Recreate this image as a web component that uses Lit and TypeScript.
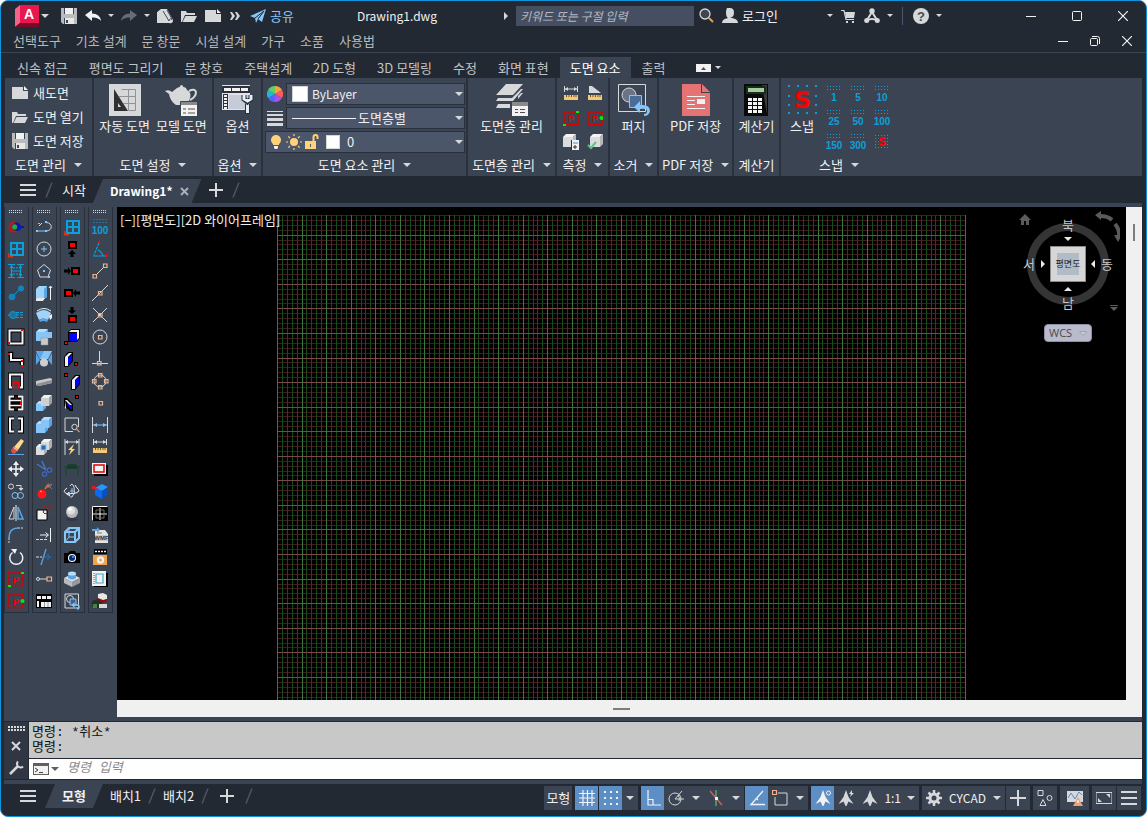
import { LitElement, html, svg, css } from "lit";
import { customElement, property } from "lit/decorators.js";
import { classMap } from "lit/directives/class-map.js";

/* ---------- drawing helpers ---------- */
const s = (c: string, d: string, w = 1) => svg`<path d=${d} fill="none" stroke=${c} stroke-width=${w}></path>`;
const f = (c: string, d: string) => svg`<path d=${d} fill=${c}></path>`;
const dash = (c: string, d: string, a = "2 1", w = 1) =>
  svg`<path d=${d} fill="none" stroke=${c} stroke-width=${w} stroke-dasharray=${a}></path>`;
const dot = (c: string, x: number, y: number, r: number) => svg`<circle cx=${x} cy=${y} r=${r} fill=${c}></circle>`;
const ring = (c: string, x: number, y: number, r: number, w = 1) =>
  svg`<circle cx=${x} cy=${y} r=${r} fill="none" stroke=${c} stroke-width=${w}></circle>`;
const label = (c: string, x: number, y: number, size: number, t: string) =>
  svg`<text x=${x} y=${y} font-size=${size} fill=${c} text-anchor="middle" font-weight="700" font-family="Liberation Sans, sans-serif">${t}</text>`;
const ic = (body: unknown, w = 16, h = w, vw = w, vh = h) =>
  html`<svg class="ic" width=${w} height=${h} viewBox="0 0 ${vw} ${vh}" aria-hidden="true">${body}</svg>`;

const CY = "#0d9fdb", LB = "#86c5f7", MB = "#5aa5e6", W = "#f2f2f2", G = "#d6d8da", R = "#ff0000", K = "#000", OR = "#f2b48c", BL = "#0000ff", NG = "#00f000", YE = "#ffd27a";

const caret = html`<svg class="caret" width="8" height="4" viewBox="0 0 8 4" aria-hidden="true"><path d="M0 0h8L4 4z" fill="#d6d8da"></path></svg>`;
const smallCaret = html`<svg class="caret" width="6" height="3" viewBox="0 0 6 3" aria-hidden="true"><path d="M0 0h6L3 3z" fill="#d6d8da"></path></svg>`;
const slash = html`<svg class="slash" width="8" height="16" viewBox="0 0 8 16" aria-hidden="true"><path d="M1 15.500L7 .5" stroke="#4b5564" stroke-width="1.500"></path></svg>`;
const burger = ic(f(G, "M0 0h16v2H0zM0 5h16v2H0zM0 10h16v2H0z"), 16, 12);
const plus = ic(f(G, "M6 0h2v14H6zM0 6h14v2H0z"), 14);

/* ---------- shared glyphs ---------- */
const iSave = [f("#b9bbbd", "M0 0h16v16H2l-2-2z"), f(W, "M4 0h8v6H4z"), f("#e8e8e8", "M4 10h9v6H4z"), f("#3b4453", "M5 12h2v3H5z"), f("#3b4453", "M3 0h1v6H3zM12 0h1v6h-1zM3 10h1v6H3z")];
const iOpen = [f(G, "M0 3h5l1 2h8v2H4L1 14H0z"), f(G, "M4.500 8H16l-3 6H1.500z")];
const iNew = [f(G, "M0 2h11v4h5v8H0z"), f(W, "M12 1l4 4h-4z")];
const iWindow = [s(CY, "M3 2h12v12H3zM9 2v12M3 8h12", 2), f("#e03010", "M0 12h1.500v3H5v1.500H0z")];
const iPsq = [s("#d80000", "M1 2h14v12.500H1z", 1.5), label("#f00000", 8, 11.5, 9, "P")];
const iP1 = [iPsq, f(NG, "M13 1h3v2h-3zM0 14h3v2H0z")];
const iP2 = [iPsq, dot(NG, 14.5, 8, 2)];
const iRuler = [s(G, "M1.500 0v6M14.500 0v6M2 3h12"), f(G, "M2 3l3-2v4zM14 3l-3-2v4z"), f("#f5c878", "M1 9h14v5H1z"), s("#6b5a30", "M3.500 9v2M6 9v2M8.500 9v2M11 9v2M13 9v2")];
const purge16 = [s(G, "M1 1h13.500v14H1z"), ring(G, 6, 6, 3.5), f("#4b5f80", "M6 6h6v6H6z"), s(LB, "M6 6h6v6H6z"), s(LB, "M9.500 12h3.500a2 2 0 0 1 0 4", 1.5), f(LB, "M7.500 12l3-3v6z")];
const sq = (x: number, y: number) => s(OR, `M${x - 1.5} ${y - 1.5}h3.500v3.500h-3.500z`, 1.2);
const slab = (x: number, y: number) => [f(K, `M${x} ${y + 4}l4-5h5v9l-5 6h-4z`), f(W, `M${x + 1} ${y + 4}l4-4h3l-4 4v9h-3z`), f(BL, `M${x + 4} ${y + 5}l4-4v7l-4 4z`)];
const redAt = (x: number, y: number) => [f(K, `M${x} ${y}h4v4h-4z`), f(R, `M${x + 1} ${y + 1}h2v2h-2z`)];
const redBox = (x: number, y: number) => [f(K, `M${x} ${y}h9v8h-9z`), f(R, `M${x + 2} ${y + 2}h5v4h-5z`)];
const cube = (x: number, y: number, z: number, a: string, b: string, c: string) => [
  f(a, `M${x} ${y + 3}h${z}v${z}h${-z}z`),
  f(b, `M${x} ${y + 3}l3-3h${z}l-3 3z`),
  f(c, `M${x + z} ${y + 3}l3-3v${z}l-3 3z`),
];

type Tool = [string, unknown];

const palettes: Tool[][] = [
  [
    ["색상", [ring("#d01010", 6, 8, 4.5, 2), f("#1414b4", "M6 4c4-2 6 1 7 3h3v2h-3c-1 3-4 4-7 2l3-2V6z"), dot("#20b040", 6.7, 8, 2.5)]],
    ["창", iWindow],
    ["높이", [s(CY, "M0 1.500h7M3.500 2v13M0 14.500h7M9 1.500h7M12.500 2v13M9 14.500h7", 1.2), s(CY, "M4 8h9"), dash(CY, "M5 11h8M5 5h8", "2 1"), f(CY, "M1.500 5h4l-2-3zM10.500 5h4l-2-3zM1.500 11h4l-2 3zM10.500 11h4l-2 3z")]],
    ["연결", [s(CY, "M3 13L13 3"), dot("#1683b5", 4, 12, 3.3), dot("#1683b5", 13, 3.5, 3)]],
    ["축", [ring(CY, 5, 8, 3.5), s(CY, "M0 8h8M3 6h4M3 10h4"), dash(CY, "M8 8h8M8 5.500h8M8 10.500h8", "3 1")]],
    ["사각형", [s(K, "M1.500 1.500h13v13h-13z", 4), s(W, "M1.500 1.500h13v13h-13z", 2), f(R, "M13 0h2v2h-2zM0 13h2v2H0z")]],
    ["꺾은선", [s(K, "M0 3h3v6h11v5", 4.5), s(W, "M0 3h3v6h11v5", 2), f(R, "M0 2h2v2H0zM13 9h2v2h-2zM13 14h2v2h-2z")]],
    ["열림", [s(K, "M4 14.500H2v-13h12v13h-2", 4), s(W, "M4 14.500H2v-13h12v13h-2", 2.2), s(R, "M5.500 9.500h5v5h-5z", 1.5)]],
    ["구간", [f(K, "M0 0h16v16H0z"), s(W, "M6 1.500H1.500v13H6M10 1.500h4.500v13H10", 2), s(W, "M2 5.500h11M2 10.500h11", 1.5), s("#8a1010", "M8 1v4M8 11v4"), f(R, "M12 6h2v4h-2z")]],
    ["괄호", [s(K, "M6 1.500H2v13h4M10 1.500h4v13h-4", 4), s(W, "M6 1.500H2v13h4M10 1.500h4v13h-4", 2)]],
    ["지우기", [f("#ffd890", "M6 8l7-8 3 2-6 9z"), f("#e05040", "M3 11l3-3.500L10 11l-3 3.500q-3 1-4-3.500z"), s(W, "M5.500 8.500l4 3"), s(MB, "M0 15.500h16", 1)]],
    ["이동", [s(W, "M8 2v12M2 8h12", 1.5), f(W, "M8 0l3 4H5zM8 16l3-4H5zM0 8l4-3v6zM16 8l-4-3v6z")]],
    ["복사", [ring(G, 3, 3.5, 2.5), s(G, "M8 2.500h5v4"), f(G, "M10.500 5h5L13 8z"), ring(LB, 7, 12.5, 3), ring(LB, 12.5, 12.5, 3)]],
    ["대칭", [s(G, "M6 2v12H1z"), s(MB, "M10 2v12h5z", 1.5), s(W, "M8 0v16")]],
    ["모깎기", [dash(G, "M1 16v-5", "2 1"), s(MB, "M1 11Q1 1 10 1", 1.5), dash(G, "M10 1h6", "2 1")]],
    ["회전", [s(W, "M4.500 3.500A6.500 6.500 0 1 0 12 3.500", 1.5), f(W, "M3 0h6l-2 5z")]],
    ["영역 1", iP1],
    ["영역 2", iP2],
  ],
  [
    ["폴리선", [s(LB, "M1 12h9", 1), s(G, "M10 3.500c7 0 7 8.500 0 8.500M3 7l3-3"), f(LB, "M0 11h2v2H0zM9 2h2v2H9zM9 11h2v2H9zM2 4h2v1H2z")]],
    ["원", [ring(G, 8, 8, 7), s(LB, "M8 5v6M5 8h6", 1)]],
    ["다각형", [s(G, "M8 1.500L14.500 7 12 14H4L1.500 7z"), f(LB, "M7 7h2v2H7zM12 13h2v2h-2z")]],
    ["돌출", [f("#9fd3fa", "M0 4l3-3h8v11l-3 2H0z"), f(MB, "M8 4l3-3v11l-3 2z"), f("#e8e8e8", "M0 14l2-1h7l-2 3H0z"), s(W, "M14.500 15V1M13 3l1.500-2L16 3")]],
    ["스윕", [f("#9fd3fa", "M0 6q8-6 15 0l-3 7q-5-3-9 0z"), s(W, "M1 4q7-5 14 0"), f(MB, "M3 13q4-3 9 0l-1 2q-4-2-7 0z"), f(W, "M13 9l3-2v4l-2 2z")]],
    ["블록", [cube(1, 1, 8, MB, "#b4ddfb", "#3f8fd4"), cube(0, 0, 9, LB, "#b4ddfb", MB), f(LB, "M9 3h7v6H9z"), f("#c9cacc", "M5 9h7v7H5z"), s("#8a8c90", "M5 9h7v7H5z", 0.5)]],
    ["로프트", [f(LB, "M0 0h16l-4 8H4z"), f(MB, "M0 0l4 8 4-8zM0 2v12l4-5zM16 2v12l-4-5z"), dot("#d0d0d0", 8, 11.5, 4)]],
    ["쐐기", [f("#c8c8c8", "M0 8l14-3 2 1v4L3 13 0 12z"), f("#8d8f92", "M0 11l16-4v3L3 13z")]],
    ["상자", [cube(0, 6, 7, LB, "#b4ddfb", MB), cube(5, 0, 8, "#cfcfcf", "#f0f0f0", "#a0a2a4")]],
    ["합집합", [cube(0, 4, 9, LB, "#b4ddfb", MB), cube(5, 0, 8, LB, "#b4ddfb", MB)]],
    ["교집합", [cube(0, 5, 8, "#dcdcdc", "#f4f4f4", "#b0b0b0"), cube(5, 0, 8, "#dcdcdc", "#f4f4f4", "#b0b0b0"), f("#2f6cb0", "M5 6h5v5H5z"), s(LB, "M5 6h5v5H5z")]],
    ["자르기", [s("#4676c8", "M1 3l9 6M6 0l4 9", 1.5), ring("#3d68c0", 8.5, 13, 2.2, 1.3), ring("#3d68c0", 13.5, 9, 2.2, 1.3)]],
    ["분해", [dot("#ff1818", 6, 11, 4.5), s("#ffb0b0", "M4 8l2 1"), s("#c07840", "M9 6l2-3h3", 1.5), dot("#f06020", 12, 3, 1.8), s("#707880", "M12 0l1 2 3-1-2 3 2 2", 1)]],
    ["잘라내기", [f(W, "M1 5h10v10H1z"), s(K, "M1 5h10v10H1z"), dash("#d01000", "M7.500 1h8v7.500h-8z", "3 1", 1.2)]],
    ["연장", [s(W, "M4 8h8M9.500 5.500L12.500 8l-3 2.500M14.500 1v14"), dash(G, "M0 12.500h12", "3 1")]],
    ["트림", [dash(G, "M0 8h6", "3 1"), s(MB, "M10 0L5 16", 1.3), dash("#2a78c0", "M8 8h8M12 5v6", "3 1")]],
    ["늘이기", [ring(G, 2, 8, 1.5), s(G, "M3 8h8"), s(OR, "M11 6h4.500v4H11z", 1.2)]],
    ["필름", [f(K, "M0 1h16v14H0z"), f(W, "M1 3h4v3H1zM6 3h4v3H6zM11 3h4v3h-4zM1 8h2v6H1zM5 9h10v5H5z"), s("#9a9a9a", "M8.500 9v5M12 9v5")]],
  ],
  [
    ["창 삽입", iWindow],
    ["위로", [redBox(4, 0), f(K, "M8 9l4 4H9.500v3h-3v-3H4z")]],
    ["오른쪽", [redBox(7, 4), f(K, "M7 8L4 4v2.500H0v3h4V12z")]],
    ["왼쪽", [redBox(0, 4), f(K, "M9 8l3-4v2.500h4v3h-4V12z")]],
    ["아래로", [redBox(4, 8), f(K, "M8 7L4 3.500h2.500V0h3v3.500H12z")]],
    ["면 앞", [f(K, "M4 3l3-3h9v9l-3 4H4z"), f(W, "M5 3l2-2h8l-2 2zM13 3l2-2v8l-2 2z"), f(BL, "M5 4h8v8H5z"), redAt(0, 12)]],
    ["면 오른쪽", [slab(0, 2), redAt(10, 11)]],
    ["면 뒤", [redAt(0, 0), slab(7, 3)]],
    ["면 왼쪽", [f(K, "M0 3h3l6 6v7H6L0 11z"), f(BL, "M3 5l5 5v5l-5-5z"), f(W, "M1 5h2l5 5H6zM1 5l1 8-1 1z"), redAt(11, 0)]],
    ["창 줌", [s(G, "M1 1h13.500v9M1 1v13.500h8"), ring(G, 10.5, 10, 2.7), s("#c98d6c", "M12.500 12l3 3", 1.5)]],
    ["빠른 치수", [s(G, "M1 0v16M15 0v16M1 3h14"), f(G, "M1 3l3-2v4zM15 3l-3-2v4z"), f(YE, "M10 5L4 11h3l-2 5 6-6H8z")]],
    ["가구", [s("#1d4a30", "M0 6h16M2 6v8M14 6v8", 1.5), f("#183c2a", "M3 4q5-2 10 0v4H3z")]],
    ["궤도", [s(G, "M6 3q2-4 4 1 2 6-2 10-3 1-3-5"), s(W, "M3 5q-6 4 1 6l8-1q5-2 1-5M5 9l-2 2.500 3 1M11 2l2 3"), s(LB, "M8 5v5M6 8h5")]],
    ["구", [svg`<ellipse cx="8" cy="14.500" rx="6" ry="1.500" fill="#303844"></ellipse>`, dot("#b8b8b8", 8, 7, 6), dot("#e0e0e0", 7, 5.5, 4), dot("#fff", 6, 4, 1.8)]],
    ["와이어 큐브", [s(LB, "M1 5l4-4h10v10l-4 4H1zM1 5h10v10M11 5l4-4", 2), s(LB, "M5 1v9L1 15M5 10h6", 1)]],
    ["카메라", [f(K, "M0 4h4l2-2h5l1 2h4v10H0z"), dot("#fff", 8, 9, 4), dot("#0a2a80", 8, 9, 3), dot("#20c0ff", 9, 8, 1)]],
    ["돌출 면", [f("#e0e0e0", "M0 7l8-4 8 4-8 4z"), f("#b9bbbd", "M0 7l8 4v5l-8-4z"), f("#98999c", "M16 7l-8 4v5l8-4z"), f(MB, "M4 2v5q4 3 8 0V2z"), svg`<ellipse cx="8" cy="2.500" rx="4" ry="2" fill="#b4ddfb"></ellipse>`]],
    ["퍼지", purge16],
  ],
  [
    ["스냅 100", [dash(CY, "M1.500 .5h14M1.500 3.500h14", "1 2", 1), label(CY, 8, 15, 10, "100")]],
    ["각도", [dash(CY, "M7 2L2 14", "3 1", 1.2), s(CY, "M1 15h14M6 9q4 2 5 6", 1.2), f("#e01010", "M6 0h2v2H6zM14 13h2v3h-2z")]],
    ["끝점", [s(G, "M3 13L13 3"), f("#3b4453", "M1 11h4v4H1zM11 1h4v4h-4z"), sq(2.5, 13), sq(13, 2.5)]],
    ["중간점", [s(G, "M0 16L16 0"), sq(8, 8)]],
    ["교차점", [s(G, "M1 1l14 14M15 1L1 15"), sq(8, 8)]],
    ["중심", [ring(G, 8, 8, 7), sq(8, 8)]],
    ["직교", [s(G, "M7.500 0v10M0 12.500h16"), sq(7, 12)]],
    ["사분점", [ring(G, 8, 8, 6), sq(8, 2), sq(8, 14), sq(2, 8), sq(14, 8)]],
    ["노드", sq(8.5, 8)],
    ["선형 치수", [s(G, "M.5 0v16M15.500 0v16"), s(LB, "M1 8h14"), f(LB, "M1.500 8L5 6v4zM14.500 8L11 6v4z")]],
    ["치수 자", iRuler],
    ["뷰포트", [f(K, "M2 4h14v11H2z"), f(W, "M0 2h14v11H0z"), s("#e00000", "M2 4h10v7H2z", 1.5)]],
    ["솔리드", [f("#2a96ff", "M3 5l7-4 6 3-6 4z"), f("#0a6cf0", "M3 5l7 3v8l-7-4z"), f("#0850c0", "M16 4l-6 4v8l6-4z"), f("#e02020", "M0 3h3v3H0z"), s("#e02020", "M3 4.500l4 2")]],
    ["배열", [f(K, "M0 1h16v15H0z"), s(W, "M8 3v12M1 9h14", 1), s("#707070", "M4 5h8v8H4z"), s(W, "M.5 15.500V1.500h15")]],
    ["WMF", [f("#e4e4e4", "M3 3h10l3 4v9H3z"), s("#7d7d7d", "M5 6h5"), f(MB, "M0 2h5V0l3 3-3 3V4H0z"), f("#c8c8c8", "M3 8h13v6H3z"), label("#30353c", 9.5, 13, 6, "WMF")]],
    ["디스크", [f(K, "M2 0h13v5H2z"), dash(W, "M3 2.500h11", "2 1", 1.5), f("#f3a24a", "M1 6h14v10H1z"), dot(W, 8.5, 11, 3.7), dot("#f3a24a", 8.5, 11, 1.5)]],
    ["레이아웃", [f(K, "M2 2h14v14H2z"), f(W, "M0 0h14v15H0z"), s("#4aa2c8", "M4 3h7v9H4z", 1.2), dash("#555", "M2 2v12", "1 1")]],
    ["일괄", [f("#e8e8e8", "M6 1l5-1 4 2v4l-5 2-4-2z"), f("#8b1010", "M6 5l5 2 4-1v2l-5 2-4-2z"), f("#2c2c2c", "M0 8l5-2 5 3v6H3l-3-2z"), f("#3a8a3a", "M1 11h4v4H1z"), f("#d8d8d8", "M7 11h8v4H7z")]],
  ],
];

/* ---------- tool palette column ---------- */
@customElement("tool-palette")
class ToolPalette extends LitElement {
  @property({ attribute: false }) tools: Tool[] = [];
  static styles = css`
    :host { display: flex; flex-direction: column; align-items: flex-start; width: 25px; box-sizing: border-box; border: 1px solid #2a303b; border-top: 0; background: #3b4453; }
    .grip { display: block; margin: 3px 0 3px 4px; }
    button { display: grid; place-items: center; width: 22px; height: 22px; padding: 0; border: 0; background: none; }
    button:hover { background: #4a566b; }
    .ic { overflow: visible; }
  `;
  render() {
    return html`<svg class="grip" width="13" height="3" viewBox="0 0 13 3" aria-hidden="true">${dash(G, "M0 .5h13M0 2.500h13", "1 1")}</svg>
      ${this.tools.map(([name, body]) => html`<button aria-label=${name}>${ic(body)}</button>`)}`;
  }
}

/* ---------- navigation cube ---------- */
@customElement("view-cube")
class ViewCube extends LitElement {
  static styles = css`
    :host { display: flex; flex-direction: column; align-items: center; width: 104px; }
    svg { display: block; }
    text { font-family: "Noto Sans CJK KR", sans-serif; }
    button { display: flex; align-items: center; justify-content: space-between; width: 48px; height: 18px; margin-top: 6px; padding: 0 4px; border: 1px solid #8d8fa2; border-radius: 4px; background: #b9bacb; color: #4a4a4a; font: 11px/16px "Open Sans", "Noto Sans CJK KR", sans-serif; }
  `;
  render() {
    return html`<svg width="104" height="108" viewBox="0 0 104 108" role="img" aria-label="뷰 큐브">
        <path d="M3 10l6-6 6 6h-2v5h-3v-4H8v4H5v-5z" fill="#5c5c5c"></path>
        <circle cx="52" cy="54" r="37" fill="none" stroke="#353535" stroke-width="8"></circle>
        <path d="M84 6q8 0 12 4M99 14q5 6 4 13" fill="none" stroke="#5a5a5a" stroke-width="4"></path>
        <path d="M79 5l6-4v9zM98 25h8l-4 7z" fill="#5a5a5a"></path>
        <rect x="34.500" y="36.500" width="35" height="35" fill="#d6d6d6" stroke="#8c8c8c"></rect>
        <rect x="41" y="43" width="22" height="22" fill="#b2bcc6"></rect>
        <text x="52" y="57" font-size="9" text-anchor="middle" fill="#20242a">평면도</text>
        <path d="M48 27h8l-4 4zM48 81h8l-4-4zM25 50v8l4-4zM79 50v8l-4-4z" fill="#e8e8e8"></path>
        <g font-size="13" fill="#c8c8c8" text-anchor="middle">
          <text x="52" y="20">북</text><text x="13" y="59">서</text><text x="91" y="59">동</text><text x="52" y="98">남</text>
        </g>
        <path d="M94 95h8v1h-8zM94 97h8l-4 4z" fill="#5c5c5c"></path>
      </svg>
      <button>WCS<svg width="8" height="5" viewBox="0 0 8 5"><path d="M.5 .5h7L4 4.500z" fill="#c4d0d4" stroke="#98a8ac"></path></svg></button>`;
  }
}

/* ---------- ribbon artwork ---------- */
const rAuto = [f(G, "M0 0h32v32H0z"), f("#303030", "M5 5l14 22H5z"), f(G, "M9 19l3 4H9z"), s("#909295", "M12.500 5.500h14v21h-7M19.500 5.500v21M10 12.500h17M14 19.500h13")];
const rTeapot = [f(G, "M12 4q5-3 9 0l1 2q6 3 2 11l-3 4H11Q5 17 4 10L0 7q4-2 7 1z"), dot(G, 16.5, 2.5, 1.5), s(G, "M24 7q6-3 7 1 0 5-6 8", 2), f(W, "M16 18h16v14H16z"), f("#8a8a8a", "M16 18h16v3H16z"), s("#505050", "M18 25h3M23 25h7M18 29h3M23 29h7"), s("#3b4453", "M15.500 32V17.500H32")];
const rOption = [f("#dfe2ea", "M0 1h28v25H0z"), f("#2c3038", "M0 2h28v7H0zM1 10h5v15H1z"), f(W, "M2 4h7v3H2zM10 4h8v3h-8zM19 4h7v3h-7z"), dash(W, "M3.500 11v14", "2 1", 3), f("#c7cbd8", "M7 11h20v14H7z"), s("#26303f", "M25.500 20v10", 5), s("#e8ecf4", "M25.500 18v11", 3), s("#26303f", "M22 11v4l3.500 3 3.500-3v-4", 5), s("#e8ecf4", "M22 11v4l3.500 2 3.500-2v-4", 3)];
const rLayers = [f(G, "M10 0h17L17 11H0zM2 14h14l9-9h2L17 17H0zM2 20h12v4H0z"), f(G, "M22 12l3-3h2l-5 6z"), f(W, "M16 18h16v14H16z"), f("#8a8a8a", "M16 18h16v4H16z"), s("#505050", "M19 25.500h3M24 25.500h5M19 28.500h3M24 28.500h5"), s("#3b4453", "M15.500 32V17.500H32")];
const rPurge = [s(G, "M.5 .5h27v27H.5z"), f("#6b7483", "M11 4a7 7 0 1 0 .1 0z"), ring(G, 11, 11, 7), f("#4a6c98", "M11 11h13v13H11z"), s(LB, "M11.500 11.500h12v12h-12z"), f(LB, "M16 23l6-6v4q10-1 10 6-1 5-6 5v-2q3 0 3-3 0-3-7-2v4z")];
const rPdf = [f("#e57373", "M0 0h19v9h9v23H0z"), f("#e57373", "M20 0l8 8h-8z"), s("#3b4453", "M19.500 0v8.500H28"), f(W, "M5 12h18v1H5zM5 16h8v1H5zM5 20h8v1H5zM5 24h18v1H5zM15 15h8v5h-8z")];
const rCalc = [f("#0a0a0a", "M0 0h24v32H0z"), f("#3a3a3a", "M18 1h5v30z"), f("#143018", "M2 2h20v8H2z"), f("#a9c9a0", "M4 4h16v4H4z"), ...[14, 18, 22, 26].flatMap((y) => [4, 9, 14].map((x) => f("#f4f4f4", `M${x} ${y}h4v3h-4z`)))];
const rSnap = [...[2, 11, 20, 29].flatMap((p) => [f(CY, `M${p} 1h2v2h-2zM${p} 28h2v2h-2z`), p > 2 && p < 29 ? f(CY, `M2 ${p}h2v2H2zM29 ${p}h2v2h-2z`) : svg``]),
  svg`<text x="16.500" y="24" font-size="23" font-weight="700" font-family="DejaVu Sans, sans-serif" text-anchor="middle" fill="#ff0000">S</text>`];
const wheel = ic([["#ffa040", 0], ["#ff5c5c", 60], ["#b050e0", 120], ["#6060ff", 180], ["#20b8d8", 240], ["#60d060", 300]].map(([c, a]) => svg`<path d="M8 8V0a8 8 0 0 1 6.930 4z" fill=${c} transform="rotate(${a} 8 8)"></path>`));
const weights = ic(f(G, "M0 1h16v1H0zM0 4h16v2H0zM0 8h16v3H0zM0 13h16v3H0z"));
const bulb = ic([dot(YE, 8, 6, 5), f(YE, "M5 9h6v2H5z"), f(W, "M6 12h4v2l-1 1H7l-1-1z")]);
const sun = ic([dot(YE, 8, 8, 4), s(YE, "M8 0v2M8 14v2M0 8h2M14 8h2M2.300 2.300l1.700 1.700M12 12l1.700 1.700M2.300 13.700L4 12M12 4l1.700-1.700", 1.2)]);
const lock = ic([f(YE, "M1 7h11v8H1z"), s(YE, "M9.500 7V3q0-2 2-2t2 2v2", 2), f("#4a566b", "M6 10h1v3H6z")]);
const mProtractor = [f(G, "M2 0h3l9 7H2z"), f("#f5c878", "M1 9h14v5H1z"), s("#6b5a30", "M3.500 9v2M6 9v2M8.500 9v2M11 9v2M13 9v2")];
const mCalc = [cube(0, 0, 10, "#dcdcdc", "#f4f4f4", "#b8b8b8"), f("#26303f", "M8 6h8v10H8z"), f(W, "M9 6h7v10H9z"), f(LB, "M10 8h5v2h-5z"), s("#26303f", "M10 13h4M12 11v4")];
const mCheck = [cube(3, 0, 10, "#dcdcdc", "#f4f4f4", "#b8b8b8"), s("#5fc48a", "M1 11l3 3 5-6", 2)];
const snapNum = (t: string) => html`<button aria-label="스냅 간격 ${t}">${ic([dash(CY, "M4 .5h13M4 3.500h13", "1 2"), label(CY, 11, 15, 10, t)], 22, 16)}</button>`;
const snapOff = html`<button aria-label="스냅 끄기">${ic([dash(CY, "M4 1.500h13M4 4.500h13M4 7.500h13M4 10.500h13M4 13.500h13", "1 2"), svg`<text x="11" y="12" font-size="12" font-weight="700" font-family="DejaVu Sans, sans-serif" text-anchor="middle" fill="#ff0000">S</text>`], 22, 16)}</button>`;

const big = (t: string, art: unknown, w = 32) => html`<button class="big">${ic(art, w, 32)}<span>${t}</span></button>`;
const row = (t: string, art: unknown) => html`<button class="row">${ic(art)}<span>${t}</span></button>`;
const mini = (t: string, art: unknown) => html`<button aria-label=${t}>${ic(art)}</button>`;

/* ---------- drawing grid ---------- */
const PITCH = 4.914;
const gridPath = (count: number, major: boolean, horizontal: boolean) => {
  const phase = horizontal ? 4 : 0;
  let d = "";
  for (let i = 0; i < count; i++) {
    if ((i % 5 === phase) !== major) continue;
    const p = Math.round(i * PITCH);
    d += horizontal ? `M0 ${p}h689v1H0z` : `M${p} 0h1v3000h-1z`;
  }
  return d;
};
const gridArt = [
  f("#451a1c", gridPath(600, false, true)),
  f("#194a1b", gridPath(141, false, false)),
  f("#7d4748", gridPath(600, true, true)),
  f("#3a763d", gridPath(141, true, false)),
];

@customElement("app-root")
class AppRoot extends LitElement {
  static styles = css`
    :host { display: flex; flex-direction: column; box-sizing: border-box; min-height: 100vh; border: 1px solid #0f93dc; border-radius: 8px; overflow: hidden; background: #222933; color: #f0f0f0; font: 13px/16px "Noto Sans CJK KR", sans-serif; white-space: nowrap; }
    button, input, select { font: inherit; color: inherit; background: none; border: 0; padding: 0; margin: 0; border-radius: 0; }
    button { display: inline-flex; align-items: center; justify-content: center; }
    .ic, .caret, .slash { display: block; flex: none; }
    nav, .row { display: flex; align-items: center; }

    .title { display: flex; align-items: center; height: 29px; padding-left: 14px; }
    .title .logo { width: 24px; }
    .title .drop { width: 12px; height: 24px; }
    .title .i { width: 24px; height: 24px; }
    .title .more { width: 19px; }
    .title .logodrop { margin-right: 6px; }
    .share { gap: 4px; margin-left: 6px; color: #86c5f7; }
    .doc { flex: 1; text-align: center; font-weight: 400; font-size: 12px; margin: 0; }
    .search { width: 178px; height: 20px; box-sizing: border-box; margin-left: 4px; padding: 0 4px; background: #464f62; font-style: italic; font-size: 12px; }
    .search::placeholder { color: #b4bac4; opacity: 1; }
    .user { gap: 4px; width: 102px; justify-content: flex-start; margin-left: 4px; }
    .sep { width: 1px; height: 18px; margin: 0 6px; background: #4a566b; }
    .win { display: flex; margin-left: 63px; }
    .win button { width: 46px; height: 28px; }
    .menu { display: flex; align-items: center; justify-content: space-between; height: 22px; padding: 0 3px 0 12px; border-bottom: 1px solid #3b4453; color: #b6babf; }
    .menu nav { gap: 15px; }
    .menu .mdi { gap: 0; }
    .menu .mdi button { width: 32px; height: 22px; }
    .tabs { display: flex; align-items: stretch; gap: 1px; height: 21px; padding: 3px 0 0 6px; color: #c0c4c8; margin-top: 1px; }
    .tabs button { padding: 0 10px; }
    .tabs .on { background: #3b4453; color: #fff; }
    .tabs .fold { gap: 4px; margin-left: 10px; padding-left: 10px; }

    .ribbon { display: flex; margin: 0 4px; background: #3b4453; min-height: 98px; }
    .panel { display: flex; flex-direction: column; box-sizing: border-box; border-right: 2px solid #2a313c; }
    .panel:last-child { border-right: 0; }
    .body { display: flex; flex: 1; justify-content: center; padding-top: 6px; }
    .cap { gap: 8px; height: 22px; align-self: center; }
    .p1 { width: 89px; } .p2 { width: 120px; } .p3 { width: 49px; } .p4 { width: 205px; } .p5 { width: 89px; }
    .p6 { width: 53px; } .p7 { width: 49px; } .p8 { width: 75px; } .p9 { width: 47px; } .p10 { width: 116px; }
    .stack { display: flex; flex-direction: column; align-items: flex-start; flex: 1; padding-left: 7px; margin-top: -3px; }
    .row { gap: 5px; height: 24px; }
    .big { flex-direction: column; justify-content: flex-start; gap: 2px; align-self: flex-start; }
    .p2 .body { gap: 6px; }
    .pair { display: grid; grid-template-columns: 24px 24px; grid-auto-rows: 24px; margin-top: -2px; }
    .nine { display: grid; grid-template-columns: repeat(3, 24px); grid-auto-rows: 24px; margin-top: -2px; }
    .p10 .body { gap: 4px; justify-content: flex-start; padding-left: 5px; }
    .props { display: flex; flex-direction: column; gap: 2px; flex: 1; padding: 0 1px 0 2px; margin-top: -1px; }
    .prop { display: flex; align-items: center; gap: 3px; padding-left: 2px; }
    .prop.wide { padding-left: 0; }
    .combo { display: grid; flex: 1; align-items: center; height: 22px; box-sizing: border-box; border: 1px solid #29303b; background: #4b566b; }
    .combo > * { grid-area: 1 / 1; }
    .combo select { appearance: none; width: 100%; height: 20px; }
    .combo .lead { display: flex; align-items: center; gap: 3px; padding-left: 5px; pointer-events: none; }
    .combo .caret { justify-self: end; margin-right: 1px; pointer-events: none; }
    .combo .s1 { padding-left: 25px; font-size: 12px; } .combo .s2 { padding-left: 71px; } .combo .s3 { padding-left: 81px; }
    .swatch { width: 14px; height: 14px; border: 1px solid #d6d6d6; background: #fff; }
    .combo .states { gap: 2px; padding-left: 2px; }
    .combo .gap { margin-left: 4px; width: 12px; height: 12px; }

    .docs { display: flex; align-items: center; height: 27px; padding-left: 19px; }
    .docs .slash { margin-left: 9px; }
    .docs .home { margin-left: 9px; }
    .docs .live { gap: 8px; height: 24px; align-self: flex-end; margin-left: 7px; padding: 0 12px 0 17px; background: #3b4453; clip-path: polygon(10px 0, 100% 0, calc(100% - 10px) 100%, 0 100%); font-weight: 700; font-size: 12px; color: #fff; }
    .docs .add { margin-left: 8px; }

    .work { display: flex; flex: 1; margin: 0 4px 0 3px; padding: 4px 0; background: #3b4453; }
    .side { display: flex; align-items: flex-start; gap: 3px; padding-right: 4px; }
    .view { display: grid; flex: 1; grid-template: 1fr 17px / 1fr 16px; }
    .canvas { position: relative; background: #000; overflow: hidden; display: flex; justify-content: center; }
    .canvas .grid { position: absolute; top: 8px; }
    .tag { position: absolute; left: 3px; top: 5px; }
    view-cube { position: absolute; right: 6px; top: 3px; }
    .vbar, .hbar { background: #f0f0f0; display: flex; justify-content: center; }
    .vbar::before { content: ""; width: 2px; height: 17px; margin-top: 17px; background: #7d7d7d; }
    .hbar { grid-column: 1 / 3; align-items: center; }
    .hbar::before { content: ""; width: 17px; height: 2px; margin-right: 16px; background: #7d7d7d; }

    .cmd { display: grid; grid-template-columns: 24px 1fr; margin: 1px 4px 0 3px; font-family: "Liberation Mono", "Noto Sans CJK KR", monospace; }
    .cmd .left { display: flex; flex-direction: column; align-items: center; justify-content: space-between; padding: 4px 0; background: #303743; grid-row: span 2; }
    .log { height: 36px; box-sizing: border-box; padding: 3px; background: #c8c8c8; color: #111; line-height: 15px; margin-left: 1px; }
    .log p { margin: 0; }
    .entry { display: flex; align-items: center; height: 20px; margin: 1px 0 0 1px; padding-left: 4px; gap: 2px; background: #fff; }
    .entry input { flex: 1; margin-left: 6px; font-style: italic; color: #111; outline: 0; }
    .entry input::placeholder { color: #8a8a8a; opacity: 1; }
    .foot { display: flex; align-items: flex-start; height: 36px; box-sizing: border-box; margin: 1px 4px 0 3px; border-top: 4px solid #3b4453; }
    .foot .lay { height: 24px; padding-left: 16px; }
    .foot .model { height: 24px; padding: 0 17px; margin-left: 9px; background: #3b4453; clip-path: polygon(10px 0, 100% 0, calc(100% - 10px) 100%, 0 100%); font-weight: 700; }
    .foot .lay .slash { margin: 0 7px; }
    .foot .lay .first { margin-left: 7px; }
    .foot .lay .add { margin: 0 4px; }
    .status { display: flex; margin: 2px 1px 0 auto; height: 24px; gap: 3px; }
    .grp { display: flex; background: #3b4453; }
    .grp button { width: 24px; height: 24px; }
    .grp .on { background: #5d8ec6; width: 23px; }
    .grp .d { width: 16px; }
    .grp .txt { width: auto; padding: 0 2px; font-size: 12px; }
    .grp .name { padding: 0 3px; }
    .grp .mod { width: 28px; }
    .grp .wide { width: 29px; }
    .tight { margin-left: -2px; }
  `;

  private on(active: boolean, extra = "") {
    return classMap({ on: active, [extra || "b"]: true });
  }

  private titleBar() {
    return html`<header class="title">
        <button class="logo" aria-label="응용프로그램">${ic([f("#e8174f", "M5 0h19v18H5z"), f("#f4638a", "M0 4l5-4v18l-5 4z"), f("#7a0b28", "M0 22l5-4h19v4z"), svg`<text x="14" y="14" font-size="14" font-weight="700" font-family="Liberation Sans, sans-serif" text-anchor="middle" fill="#fff">A</text>`], 24, 22)}</button>
        <button class="drop logodrop" aria-label="메뉴">${caret}</button>
        <button class="i" aria-label="저장">${ic(iSave)}</button>
        <button class="i" aria-label="명령 취소">${ic(f(W, "M0 7l7-5v3.500q8 0 9 7.500-3-4-9-3.500V13z"))}</button>
        <button class="drop" aria-label="취소 목록">${smallCaret}</button>
        <button class="i" aria-label="명령 복구">${ic(f("#676d76", "M16 7L9 2v3.500Q1 5.500 0 13q3-4 9-3.500V13z"))}</button>
        <button class="drop" aria-label="복구 목록">${smallCaret}</button>
        <button class="i" aria-label="시트">${ic([f(G, "M0 4l4-3h6l6 11q0 4-4 3H0z"), s("#454c58", "M6 3l6 10M10 2l5 9M12 13q1-4 3-1"), f("#222933", "M0 1h3L0 4z")])}</button>
        <button class="i" aria-label="열기">${ic(iOpen)}</button>
        <button class="i" aria-label="새로 만들기">${ic(iNew)}</button>
        <button class="i more" aria-label="더 보기">${ic(f(G, "M0 0h2l3 4-3 4H0l2-4zM5 0h2l3 4-3 4H5l2-4z"), 10, 8)}</button>
        <button class="share">${ic([f(LB, "M0 8l16-7-4 13-4-3-2 4-1-5z"), s("#222933", "M5 10l9-7-6 8")])}공유</button>
        <h1 class="doc">Drawing1.dwg</h1>
        <button class="drop" aria-label="검색 접기">${ic(f(G, "M0 0l4 4-4 4z"), 4, 8)}</button>
        <input class="search" type="search" aria-label="검색" placeholder="키워드 또는 구절 입력" />
        <button class="i" aria-label="찾기">${ic([f("#3f4651", "M6 1a5 5 0 1 0 .1 0z"), ring(G, 6, 6, 5, 1.3), s("#d9a45c", "M10 10l4 4", 2)], 15, 15)}</button>
        <button class="user">${ic([f(G, "M8 0q4 0 4 4.500T8 10 4 4.500 8 0z"), f(G, "M0 15q0-4 6-5h4q6 1 6 5z")])}로그인</button>
        <button class="drop" aria-label="계정 메뉴">${smallCaret}</button>
        <button class="i" aria-label="스토어">${ic([s(G, "M0 1.500h3l2 9h8", 1.2), f(G, "M4 3h10l-1 6H5zM5 12h2v2H5zM11 12h2v2h-2z")], 14)}</button>
        <button class="i" aria-label="Autodesk 앱">${ic([s(G, "M8 4l5 8M8 4L3 12M3 12.500q5-3 10 0", 2), dot(G, 8, 3, 2.7), dot(G, 2.7, 12.5, 2.5), dot(G, 13.3, 12.5, 2.5)])}</button>
        <button class="drop" aria-label="앱 메뉴">${smallCaret}</button>
        <span class="sep"></span>
        <button class="i" aria-label="도움말">${ic([dot(G, 8, 8, 8), svg`<text x="8" y="13" font-size="13" font-weight="700" font-family="Liberation Sans, sans-serif" text-anchor="middle" fill="#454c58">?</text>`])}</button>
        <button class="drop" aria-label="도움말 메뉴">${smallCaret}</button>
        <div class="win">
          <button aria-label="최소화">${ic(f(W, "M0 5h10v1H0z"), 10)}</button>
          <button aria-label="최대화">${ic(s(W, "M1.500 .5h7q1 0 1 1v7q0 1-1 1h-7q-1 0-1-1v-7q0-1 1-1z"), 10)}</button>
          <button aria-label="닫기">${ic(s(W, "M0 0l10 10M10 0L0 10", 1.2), 10)}</button>
        </div>
      </header>
      <div class="menu">
        <nav>${["선택도구", "기초 설계", "문 창문", "시설 설계", "가구", "소품", "사용법"].map((t) => html`<button>${t}</button>`)}</nav>
        <nav class="mdi">
          <button aria-label="도면 최소화">${ic(f(W, "M0 5h10v1H0z"), 10)}</button>
          <button aria-label="도면 복원">${ic([s(W, "M1.500 2.500h5q1 0 1 1v5q0 1-1 1h-5q-1 0-1-1v-5q0-1 1-1z"), s(W, "M2 .5h5.500q2 0 2 2V8")], 10)}</button>
          <button aria-label="도면 닫기">${ic(s(W, "M0 0l10 10M10 0L0 10", 1.2), 10)}</button>
        </nav>
      </div>`;
  }

  private ribbonTabs() {
    const names = ["신속 접근", "평면도 그리기", "문 창호", "주택설계", "2D 도형", "3D 모델링", "수정", "화면 표현", "도면 요소", "출력"];
    return html`<nav class="tabs" role="tablist">
      ${names.map((t) => html`<button role="tab" class=${this.on(t === "도면 요소")}>${t}</button>`)}
      <button class="fold" aria-label="리본 최소화">${ic([f(W, "M0 0h15v8H0z"), f("#454c58", "M5 6h5L7.500 3z")], 15, 8)}${smallCaret}</button>
    </nav>`;
  }

  private panel(cls: string, name: string, body: unknown, drop = true) {
    return html`<section class="panel ${cls}"><div class="body">${body}</div><button class="cap">${name}${drop ? caret : ""}</button></section>`;
  }

  private ribbon() {
    return html`<div class="ribbon">
      ${this.panel("p1", "도면 관리", html`<div class="stack">${row("새도면", iNew)}${row("도면 열기", iOpen)}${row("도면 저장", iSave)}</div>`)}
      ${this.panel("p2", "도면 설정", html`${big("자동 도면", rAuto)}${big("모델 도면", rTeapot)}`)}
      ${this.panel("p3", "옵션", big("옵션", rOption))}
      ${this.panel("p4", "도면 요소 관리", html`<div class="props">
        <div class="prop">${wheel}<div class="combo"><select class="s1" aria-label="객체 색상"><option>ByLayer</option></select><span class="lead"><i class="swatch"></i></span>${caret}</div></div>
        <div class="prop">${weights}<div class="combo"><select class="s2" aria-label="선가중치"><option>도면층별</option></select><span class="lead">${ic(f(W, "M0 0h64v1H0z"), 64, 1)}</span>${caret}</div></div>
        <div class="prop wide"><div class="combo"><select class="s3" aria-label="도면층"><option>0</option></select><span class="lead states">${bulb}${sun}${lock}<i class="swatch gap"></i></span>${caret}</div></div>
      </div>`)}
      ${this.panel("p5", "도면층 관리", big("도면층 관리", rLayers))}
      ${this.panel("p6", "측정", html`<div class="pair">${mini("거리", iRuler)}${mini("각도", mProtractor)}${mini("면적 1", iP1)}${mini("면적 2", iP2)}${mini("체적", mCalc)}${mini("확인", mCheck)}</div>`)}
      ${this.panel("p7", "소거", big("퍼지", rPurge))}
      ${this.panel("p8", "PDF 저장", big("PDF 저장", rPdf, 28))}
      ${this.panel("p9", "계산기", big("계산기", rCalc, 24), false)}
      ${this.panel("p10", "스냅", html`${big("스냅", rSnap)}<div class="nine">${["1", "5", "10", "25", "50", "100", "150", "300"].map(snapNum)}${snapOff}</div>`)}
    </div>`;
  }

  private docTabs() {
    return html`<nav class="docs">
      <button aria-label="파일 탭 메뉴">${burger}</button>${slash}
      <button class="home">시작</button>
      <button class="live">Drawing1* ${ic(s("#a9afb8", "M1 1l7 7M8 1L1 8", 2), 9)}</button>
      <button class="add" aria-label="새 도면">${plus}</button>${slash}
    </nav>`;
  }

  private statusBar() {
    const d = html`<button class="d" aria-label="옵션 목록">${caret}</button>`;
    const b = (n: string, art: unknown, on = false, extra = "") => html`<button class=${this.on(on, extra)} aria-label=${n}>${ic(art)}</button>`;
    const man = "M8 0l2.500 7 5 7-5-2.500L8.500 16h-1L5.500 11.500.5 14l5-7z";
    return html`<div class="status">
      <div class="grp"><button class="mod">모형</button></div>
      <div class="grp">${b("그리드", s(W, "M4 0v16M8.500 0v16M13 0v16M0 3.500h16M0 8h16M0 12.500h16", 1.2), true)}</div>
      <div class="grp tight">${b("스냅", f(W, [1, 7, 13].flatMap((y) => [1, 7, 13].map((x) => `M${x} ${y}h2v2h-2z`)).join("")), true)}${d}</div>
      <div class="grp">${b("직교", s(W, "M3 0v15H16M3 9.500h5v5", 1.2), true)}${b("극좌표", [ring(G, 7, 9, 6), s(G, "M7 9l7-8M7 9h9M10 5q2 2 1 6")])}${d}${b("등각투영", [s("#e06060", "M2 1l12 14", 1.2), s("#60c070", "M8 0v16", 1.2), f(W, "M7 7h3v3H7z")])}${d}</div>
      <div class="grp tight">${b("객체 추적", s(W, "M14 1L2 14.500h14M7 8l2 2", 1.3), true)}${b("객체 스냅", [s(G, "M6 3h9v12H3V7"), s(OR, "M.5 .5h4v4h-4z", 1.2)])}${d}</div>
      <div class="grp">${b("주석 가시성", [f(W, man), ring(W, 13.5, 3, 2)], true)}${b("자동 축척", [f(G, man), f(G, "M14 0l-3 4h2l-1 3 4-4h-2z")])}${b("주석 축척", f(G, man))}<button class="txt">1:1</button>${d}</div>
      <div class="grp">${b("작업공간", [ring(G, 8, 8, 4, 3), s(G, "M8 0v3M8 13v3M0 8h3M13 8h3M2.500 2.500l2 2M11.500 11.500l2 2M2.500 13.500l2-2M11.500 4.500l2-2", 2.5)])}<button class="txt name">CYCAD</button>${d}</div>
      <div class="grp tight">${b("주석 감시", f(G, "M7 0h2v16H7zM0 7h16v2H0z"))}</div>
      <div class="grp">${b("객체 분리", [s(G, "M1 .5h5v5H1zM6 9.500l3 6H3z"), ring(G, 12.5, 8, 2.5)])}</div>
      <div class="grp">${b("그래픽 성능", [f(G, "M0 1h16v11H0z"), s("#5a8fc0", "M1 8l3-5 4 6 4-7 3 3"), f("#f0a070", "M11 7l5 9H6z"), s(W, "M11 10v3", 1.5)], false, "wide")}</div>
      <div class="grp">${b("화면 정리", [s(G, "M0 2.500h16v11H0z"), f(G, "M14 4v4l-4-4zM2 12V8l4 4z")])}</div>
      <div class="grp tight">${b("사용자화", f(G, "M0 1h16v2H0zM0 7h16v2H0zM0 13h16v2H0z"))}</div>
    </div>`;
  }

  render() {
    return html`${this.titleBar()}${this.ribbonTabs()}${this.ribbon()}${this.docTabs()}
      <main class="work">
        <div class="side">${palettes.map((p) => html`<tool-palette .tools=${p}></tool-palette>`)}</div>
        <div class="view">
          <div class="canvas">
            <svg class="grid" width="689" height="100%" shape-rendering="crispEdges" aria-hidden="true">${gridArt}</svg>
            <span class="tag">[−][평면도][2D 와이어프레임]</span>
            <view-cube></view-cube>
          </div>
          <div class="vbar"></div>
          <div class="hbar"></div>
        </div>
      </main>
      <section class="cmd">
        <div class="left">${ic(dash(G, "M0 1h17M0 4h17", "2 1", 2), 17, 5)}
          <button aria-label="명령행 닫기">${ic(s(G, "M1 1l8 8M9 1L1 9", 2), 10)}</button>
          <button aria-label="사용자화">${ic([s(G, "M1 14l8-8", 2.5), s(G, "M9 1.500q-2 2 0 5 3 2 5 0", 2)], 15, 15)}</button>
        </div>
        <div class="log"><p>명령: *취소*</p><p>명령:</p></div>
        <div class="entry">
          <button aria-label="최근 명령">${ic([f("#606060", "M0 0h16v12H0z"), f(W, "M1 3h14v8H1z"), s("#404040", "M2 5l3 2-3 2M6 9.500h4")], 16, 12)}</button>
          <svg class="caret" width="8" height="4" viewBox="0 0 8 4"><path d="M0 0h8L4 4z" fill="#606060"></path></svg>
          <input aria-label="명령 입력" placeholder="명령 입력" />
        </div>
      </section>
      <footer class="foot">
        <nav class="lay">
          <button aria-label="배치 메뉴">${burger}</button>
          <button class="model">모형</button>
          <button class="first">배치1</button>${slash}<button>배치2</button>${slash}
          <button class="add" aria-label="새 배치">${plus}</button>${slash}
        </nav>
        ${this.statusBar()}
      </footer>`;
  }
}
